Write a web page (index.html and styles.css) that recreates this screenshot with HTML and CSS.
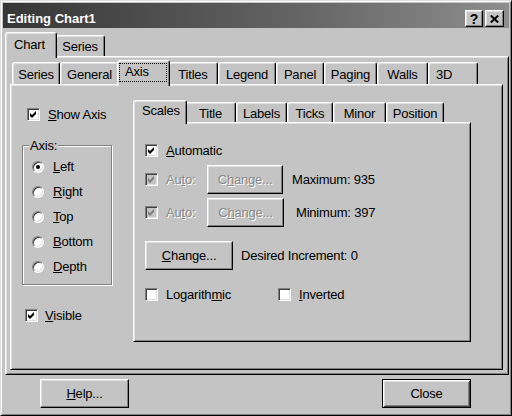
FILE: index.html
```html
<!DOCTYPE html>
<html>
<head>
<meta charset="utf-8">
<title>Editing Chart1</title>
<link rel="stylesheet" href="styles.css">
</head>
<body>
<div class="window">
  <div class="titlebar">
    <span class="title">Editing Chart1</span>
    <div class="tb-buttons">
      <span class="tb-btn tb-help">?</span>
      <span class="tb-btn tb-close"><svg width="9" height="8" viewBox="0 0 9 8"><path d="M0.8 0.5L8.2 7.5M8.2 0.5L0.8 7.5" stroke="#000" stroke-width="2" fill="none"/></svg></span>
    </div>
  </div>
  <div class="client">
    <div class="tabrow outer-tabs">
      <div class="tab sel">Chart</div>
      <div class="tab">Series</div>
    </div>
    <div class="panel outer-panel">
      <div class="tabrow inner-tabs">
        <div class="tab">Series</div>
        <div class="tab">General</div>
        <div class="tab sel focus-tab"><span class="focus">Axis</span></div>
        <div class="tab">Titles</div>
        <div class="tab">Legend</div>
        <div class="tab">Panel</div>
        <div class="tab">Paging</div>
        <div class="tab">Walls</div>
        <div class="tab tab-left">3D</div>
      </div>
      <div class="panel inner-panel">
        <div class="leftcol">
          <div class="check-row show-axis">
            <span class="cb"><svg width="13" height="13" viewBox="0 0 13 13"><polygon points="3,5 5,7 9,3 9,6 5,10 3,8" fill="#000"/></svg></span>
            <span class="lbl"><u>S</u>how Axis</span>
          </div>
          <div class="group">
            <div class="legend">Axis:</div>
            <div class="radios">
              <div class="radio-row"><span class="rb on"></span><span class="rlbl"><u>L</u>eft</span></div>
              <div class="radio-row"><span class="rb"></span><span class="rlbl"><u>R</u>ight</span></div>
              <div class="radio-row"><span class="rb"></span><span class="rlbl"><u>T</u>op</span></div>
              <div class="radio-row"><span class="rb"></span><span class="rlbl"><u>B</u>ottom</span></div>
              <div class="radio-row"><span class="rb"></span><span class="rlbl"><u>D</u>epth</span></div>
            </div>
          </div>
          <div class="check-row visible">
            <span class="cb"><svg width="13" height="13" viewBox="0 0 13 13"><polygon points="3,5 5,7 9,3 9,6 5,10 3,8" fill="#000"/></svg></span>
            <span class="lbl lbl-tight"><u>V</u>isible</span>
          </div>
        </div>
        <div class="scales">
          <div class="tabrow scale-tabs">
            <div class="tab sel">Scales</div>
            <div class="tab">Title</div>
            <div class="tab">Labels</div>
            <div class="tab">Ticks</div>
            <div class="tab">Minor</div>
            <div class="tab">Position</div>
          </div>
          <div class="panel scales-panel">
            <div class="row r-auto">
              <span class="cb"><svg width="13" height="13" viewBox="0 0 13 13"><polygon points="3,5 5,7 9,3 9,6 5,10 3,8" fill="#000"/></svg></span>
              <span class="lbl"><u>A</u>utomatic</span>
            </div>
            <div class="row r-max">
              <div class="autogrp">
                <span class="cb cb-dis"><svg width="13" height="13" viewBox="0 0 13 13"><polygon points="3,5 5,7 9,3 9,6 5,10 3,8" fill="#808080"/></svg></span>
                <span class="lbl dis">Au<u>t</u>o:</span>
              </div>
              <button class="btn btn-change-dis dis">C<u>h</u>ange...</button>
              <span class="value">Maximum: 935</span>
            </div>
            <div class="row r-min">
              <div class="autogrp">
                <span class="cb cb-dis"><svg width="13" height="13" viewBox="0 0 13 13"><polygon points="3,5 5,7 9,3 9,6 5,10 3,8" fill="#808080"/></svg></span>
                <span class="lbl dis">Au<u>t</u>o:</span>
              </div>
              <button class="btn btn-change-dis btn-min dis">C<u>h</u>ange...</button>
              <span class="value value-wide">Minimum: 397</span>
            </div>
            <div class="row r-inc">
              <button class="btn btn-change"><u>C</u>hange...</button>
              <span class="value value-inc">Desired Increment: 0</span>
            </div>
            <div class="row r-log">
              <div class="loggrp">
                <span class="cb"></span>
                <span class="lbl">Logarith<u>m</u>ic</span>
              </div>
              <span class="cb"></span>
              <span class="lbl"><u>I</u>nverted</span>
            </div>
          </div>
        </div>
      </div>
    </div>
    <div class="btnrow">
      <button class="btn btn-foot"><u>H</u>elp...</button>
      <button class="btn btn-foot btn-default">Close</button>
    </div>
  </div>
</div>
</body>
</html>
```

FILE: styles.css
```css
* { box-sizing: border-box; }
html, body { margin: 0; padding: 0; }
body {
  width: 512px;
  height: 416px;
  overflow: hidden;
  background: #c4c4c4;
  font-family: "Liberation Sans", Arial, sans-serif;
  font-size: 13px;
  letter-spacing: -0.2px;
  line-height: 15px;
  color: #000;
}
u { text-decoration: underline; text-underline-offset: 1px; }

.window {
  width: 512px;
  height: 416px;
  background: #c4c4c4;
  border: 1px solid;
  border-color: #dfdfdf #000 #000 #dfdfdf;
  box-shadow: inset 1px 1px #fff, inset -1px -1px #808080;
  padding: 2px;
  display: flex;
  flex-direction: column;
}

/* title bar */
.titlebar {
  flex: none;
  height: 25px;
  display: flex;
  align-items: flex-start;
  justify-content: space-between;
  padding: 0 5px 0 4px;
  background: linear-gradient(to right, #363636 0%, #666 60%, #8e8e8e 100%);
}
.title {
  margin-top: 8px;
  color: #fff;
  font-weight: bold;
  font-size: 13px;
  line-height: 16px;
  letter-spacing: 0;
}
.tb-buttons { display: flex; gap: 2px; margin-top: 7px; }
.tb-btn {
  height: 17px;
  width: 18px;
  display: flex;
  align-items: center;
  justify-content: center;
  background: #c4c4c4;
  border: 1px solid;
  border-color: #fff #000 #000 #fff;
  box-shadow: inset -1px -1px #808080, inset 1px 1px #dfdfdf;
  font-weight: bold;
  font-size: 14px;
  line-height: 14px;
  letter-spacing: 0;
}
.tb-close { width: 19px; }

.client {
  flex: 1;
  display: flex;
  flex-direction: column;
  padding: 2px 0 0 2px;
}

/* tabs */
.tabrow {
  flex: none;
  display: flex;
  align-items: flex-end;
  padding-left: 2px;
}
.tab {
  flex: none;
  height: 20px;
  border: 1px solid;
  border-bottom: 0;
  border-color: #fff #000 #000 #fff;
  border-radius: 3px 3px 0 0;
  box-shadow: inset 1px 1px #dfdfdf, inset -1px 0 #808080;
  background: #c4c4c4;
  padding-top: 3px;
  text-align: center;
  white-space: nowrap;
}
.tab.sel {
  position: relative;
  z-index: 2;
  margin: 0 -2px -2px -2px;
  text-align: left;
  padding-left: 8px;
}
.tab-left { text-align: left; padding-left: 7px; }

.outer-tabs { height: 24px; margin-top: 2px; }
.outer-tabs .tab { height: 21px; }
.outer-tabs .tab.sel { height: 26px; padding-top: 4px; }
.outer-tabs .tab:nth-child(1) { width: 52px; }
.outer-tabs .tab:nth-child(2) { width: 50px; }

.inner-tabs { height: 24px; }
.inner-tabs .tab { height: 22px; padding-top: 4px; }
.inner-tabs .tab.sel { height: 26px; }
.inner-tabs .tab:nth-child(1) { width: 48px; }
.inner-tabs .tab:nth-child(2) { width: 59px; }
.inner-tabs .tab:nth-child(3) { width: 53px; }
.inner-tabs .tab:nth-child(4) { width: 50px; }
.inner-tabs .tab:nth-child(5) { width: 58px; }
.inner-tabs .tab:nth-child(6) { width: 48px; }
.inner-tabs .tab:nth-child(7) { width: 53px; }
.inner-tabs .tab:nth-child(8) { width: 51px; }
.inner-tabs .tab:nth-child(9) { width: 50px; }
.inner-tabs .focus-tab { padding: 2px 0 0 1px; }
.focus {
  display: block;
  width: 48px;
  height: 19px;
  border: 1px dotted #000;
  padding-left: 5px;
}

.scale-tabs { height: 22px; }
.scale-tabs .tab { height: 20px; }
.scale-tabs .tab.sel { height: 24px; padding-top: 2px; }
.scale-tabs .tab:nth-child(1) { width: 54px; }
.scale-tabs .tab:nth-child(2) { width: 51px; }
.scale-tabs .tab:nth-child(3) { width: 51px; }
.scale-tabs .tab:nth-child(4) { width: 46px; }
.scale-tabs .tab:nth-child(5) { width: 53px; }
.scale-tabs .tab:nth-child(6) { width: 58px; }

/* panels */
.panel {
  border: 1px solid;
  border-color: #fff #000 #000 #fff;
  box-shadow: inset 1px 1px #dfdfdf, inset -1px -1px #808080;
  background: #c4c4c4;
}
.outer-panel {
  flex: none;
  height: 319px;
  padding: 3px 5px 4px 4px;
  display: flex;
  flex-direction: column;
}
.inner-panel {
  flex: none;
  height: 286px;
  padding: 1px;
  display: flex;
}

/* left column */
.leftcol { width: 121px; flex: none; display: flex; flex-direction: column; }
.check-row { display: flex; align-items: center; height: 13px; }
.show-axis { margin-top: 22px; padding-left: 15px; }
.visible { margin-top: 24px; padding-left: 13px; }
.lbl { margin-left: 8px; white-space: nowrap; }
.lbl-tight { margin-left: 7px; }

.cb {
  flex: none;
  width: 13px;
  height: 13px;
  display: block;
  background: #fff;
  border: 1px solid;
  border-color: #808080 #fff #fff #808080;
  box-shadow: inset 1px 1px #404040, inset -1px -1px #dfdfdf;
}
.cb svg { display: block; margin: -1px; }
.cb-dis { background: #c4c4c4; }

.group {
  margin: 24px 0 0 10px;
  width: 90px;
  height: 140px;
  flex: none;
  border: 1px solid #808080;
  box-shadow: inset 1px 1px #fff, 1px 1px #fff;
}
.legend {
  width: max-content;
  margin: -8px 0 0 6px;
  padding: 0 1px;
  height: 15px;
  background: #c4c4c4;
}
.radios { padding-top: 1px; }
.radio-row { height: 25px; display: flex; align-items: center; padding-left: 9px; }
.rb {
  flex: none;
  width: 12px;
  height: 12px;
  border-radius: 50%;
  background: #fff;
  border: 1px solid;
  border-color: #808080 #fff #fff #808080;
  box-shadow: inset 1px 1px #404040, inset -1px -1px #dfdfdf;
  display: flex;
  align-items: center;
  justify-content: center;
}
.rb.on::after {
  content: "";
  width: 4px;
  height: 4px;
  border-radius: 50%;
  background: #000;
}
.rlbl { margin-left: 9px; }

/* scales */
.scales { width: 338px; flex: none; margin-top: 14px; display: flex; flex-direction: column; }
.scales-panel {
  height: 220px;
  flex: none;
  padding: 1px 1px 1px 11px;
  display: flex;
  flex-direction: column;
}
.row { display: flex; align-items: center; flex: none; }
.r-auto { margin-top: 19px; height: 14px; }
.r-max { margin-top: 8px; height: 29px; }
.r-min { margin-top: 4px; height: 29px; }
.r-inc { margin-top: 14px; height: 29px; }
.r-log { margin-top: 17px; height: 14px; }
.autogrp { width: 62px; flex: none; display: flex; align-items: center; }
.loggrp { width: 133px; flex: none; display: flex; align-items: center; }

.dis { color: #8a8a8a; text-shadow: 1px 1px 0 #fff; }
.value { margin-left: 9px; white-space: nowrap; }
.value-wide { margin-left: 12px; }
.value-inc { margin-left: 8px; }

.btn {
  flex: none;
  height: 29px;
  padding: 0;
  margin: 0;
  font: inherit;
  letter-spacing: inherit;
  color: #000;
  background: #c4c4c4;
  border: 1px solid;
  border-color: #fff #000 #000 #fff;
  box-shadow: inset -1px -1px #808080, inset 1px 1px #dfdfdf;
  text-align: center;
}
.btn.dis { color: #8a8a8a; }
.btn-change-dis { width: 76px; }
.btn-min { width: 77px; }
.btn-change { width: 88px; }

.btnrow {
  flex: none;
  display: flex;
  justify-content: space-between;
  margin-top: 4px;
  padding: 0 38px 0 35px;
}
.btn-foot { width: 89px; }
.btn-default {
  border-color: #000;
  box-shadow: inset 1px 1px #fff, inset -1px -1px #404040, inset 2px 2px #dfdfdf, inset -2px -2px #808080;
}
```
